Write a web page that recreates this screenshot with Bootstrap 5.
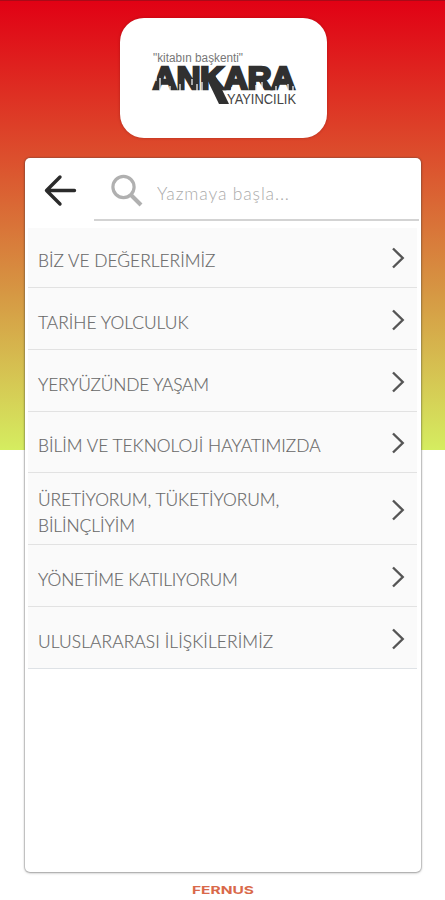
<!DOCTYPE html>
<html lang="tr">
<head>
<meta charset="utf-8">
<meta name="viewport" content="width=device-width, initial-scale=1">
<title>Ankara Yayıncılık</title>
<link href="https://cdn.jsdelivr.net/npm/bootstrap@5.3.0/dist/css/bootstrap.min.css" rel="stylesheet">
<style>
body{height:900px;overflow:hidden;font-family:Lato,"Open Sans",sans-serif;background:#fff linear-gradient(#e10014,#dc4f2d 35%,#d69743 65%,#d5ed60) 0 0/100% 450px no-repeat;border-top:1px solid #a90a18}
.brand-box{width:207px;height:120px;margin:17px 0 0 120px;border-radius:24px;box-shadow:0 0 3px rgba(90,0,0,.35)}
.panel{width:396px;height:714px;margin-top:20px;margin-left:25px;border-radius:5px;box-shadow:0 0 1px 1px rgba(70,70,70,.27),0 1px 3px rgba(0,0,0,.25)}
.top-bar{height:70px;padding:0 2px 7px 18px}
.back-btn{margin-top:15px}
.search-box{width:325px;height:63px;border-bottom:2px solid #d3d3d3;padding-left:16px;padding-top:3px}
.search-box input,.search-box input:focus{font-size:17.5px;font-weight:300;letter-spacing:.85px;color:#999;padding:8px 0 0 13px;box-shadow:none;background:none}
.search-box input::placeholder{color:#aaa;opacity:1}
.topics{margin:0 4px 0 3px}
.topics .list-group-item{height:61.8px;padding:4px 12px 0 10px;background:#fafafa;border-color:#e2e2e2;color:#666;font-size:17.4px;font-weight:300;line-height:26px}
.topics .list-group-item:first-child{height:60px;padding-top:2px}
.topics .list-group-item.two-line{height:72px}
.topics span{padding-top:5px;white-space:nowrap;-webkit-text-stroke:.15px #666}
.topics .two-line span{padding-top:4px;letter-spacing:-.08px}
.topics .tight span{letter-spacing:-.2px}
.topics .loose span{letter-spacing:.09px}
.topics svg{margin-top:-1px}
.maker{margin-top:9px}
</style>
<script src="https://cdn.jsdelivr.net/npm/bootstrap@5.3.0/dist/js/bootstrap.bundle.min.js"></script>
</head>
<body>
<svg class="d-none"><symbol id="chev" viewBox="0 0 14 22"><path d="M2 1.5 11.7 11 2 20.5" fill="none" stroke="#555" stroke-width="2.4"/></symbol></svg>
<header class="brand-box bg-white">
<svg width="207" height="120" viewBox="120 18 207 120" role="img">
<text x="153" y="62" font-family="Liberation Sans,sans-serif" font-size="12" fill="#777" textLength="90" lengthAdjust="spacingAndGlyphs">"kitabın başkenti"</text>
<g fill="#303030" stroke="#303030">
<text x="153" y="88.500" font-family="Liberation Sans,sans-serif" font-weight="700" font-size="31" textLength="142" lengthAdjust="spacingAndGlyphs" stroke-width="2.600">ANKARA</text>
<path d="M206 77 215 75 229 104H219z" stroke="none"/>
</g>
<path d="M156 73v8M160 78v12M170 86v5M180 84v7M186 82v9M192 79v6M197 84v7M202 82v9M232 87v4M256 85v6M262 82v9M276 86v5M288 84v7M293 86v5" stroke="#fff" stroke-width="1.2"/>
<text x="227" y="104" font-family="Liberation Sans,sans-serif" font-size="15" fill="#444" textLength="69" lengthAdjust="spacingAndGlyphs">YAYINCILIK</text>
</svg>
</header>
<main class="panel bg-white">
<div class="top-bar d-flex justify-content-between align-items-start">
<button class="btn back-btn p-0 border-0 d-flex" aria-label="Geri"><svg width="34" height="34" viewBox="0 0 34 34" fill="none" stroke="#2b2b2b" stroke-width="3.400" stroke-linecap="round" stroke-linejoin="round"><path d="M31.500 17.500H3.500M17 4 3.500 17.500 17 31"/></svg></button>
<div class="search-box d-flex align-items-center">
<svg class="flex-shrink-0" width="34" height="34" viewBox="0 0 34 34" fill="none" stroke="#b0b0b0"><circle cx="13.500" cy="14" r="10.600" stroke-width="3.200"/><path d="m21 22 10 10" stroke-width="4"/></svg>
<input class="form-control border-0" placeholder="Yazmaya başla...">
</div>
</div>
<div class="topics list-group list-group-flush">
<a class="list-group-item d-flex justify-content-between align-items-center"><span>BİZ VE DEĞERLERİMİZ</span><svg width="14" height="22"><use href="#chev"/></svg></a>
<a class="list-group-item d-flex justify-content-between align-items-center"><span>TARİHE YOLCULUK</span><svg width="14" height="22"><use href="#chev"/></svg></a>
<a class="list-group-item tight d-flex justify-content-between align-items-center"><span>YERYÜZÜNDE YAŞAM</span><svg width="14" height="22"><use href="#chev"/></svg></a>
<a class="list-group-item d-flex justify-content-between align-items-center"><span>BİLİM VE TEKNOLOJİ HAYATIMIZDA</span><svg width="14" height="22"><use href="#chev"/></svg></a>
<a class="list-group-item two-line d-flex justify-content-between align-items-center"><span>ÜRETİYORUM, TÜKETİYORUM,<br>BİLİNÇLİYİM</span><svg width="14" height="22"><use href="#chev"/></svg></a>
<a class="list-group-item tight d-flex justify-content-between align-items-center"><span>YÖNETİME KATILIYORUM</span><svg width="14" height="22"><use href="#chev"/></svg></a>
<a class="list-group-item loose border-bottom d-flex justify-content-between align-items-center"><span>ULUSLARARASI İLİŞKİLERİMİZ</span><svg width="14" height="22"><use href="#chev"/></svg></a>
</div>
</main>
<footer class="maker d-flex justify-content-center"><svg width="64" height="16" viewBox="0 0 64 16"><text x="1" y="12.500" font-family="Inter,sans-serif" font-size="11" font-weight="700" fill="#d9694a" textLength="62" lengthAdjust="spacingAndGlyphs">FERNUS</text></svg></footer>
</body>
</html>
